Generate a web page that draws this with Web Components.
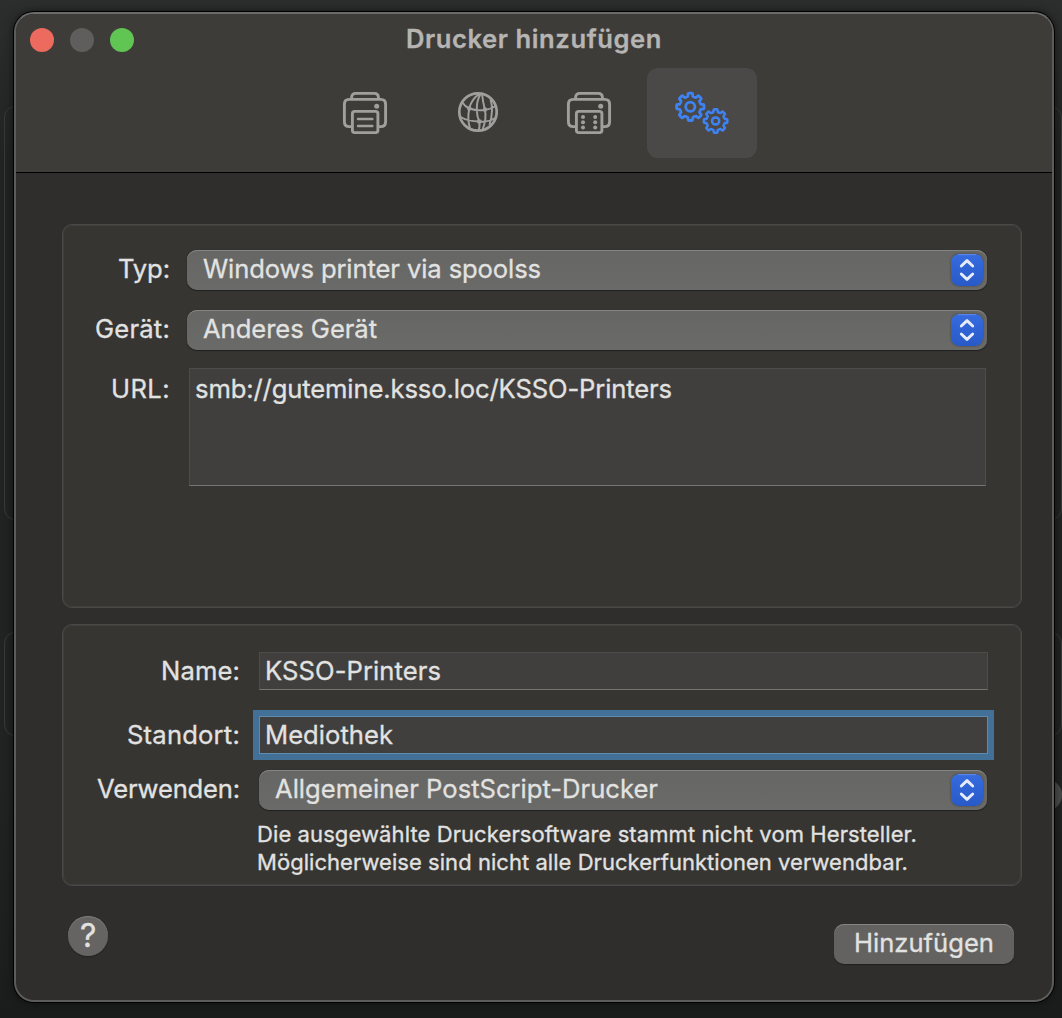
<!DOCTYPE html>
<html lang="de">
<head>
<meta charset="utf-8">
<title>Drucker hinzufügen</title>
<style>
html,body{margin:0;height:100%;overflow:hidden}
body{font:25.6px/30px Inter,"Liberation Sans",sans-serif;color:#e2e2e1;background:#1c1f1e;-webkit-text-stroke:.3px currentColor}
</style>
</head>
<body>
<printer-dialog></printer-dialog>
<script>
const define = (name, html, init) => customElements.define(name, class extends HTMLElement {
  connectedCallback() {
    if (this.shadowRoot) return;
    this.attachShadow({mode: 'open'}).innerHTML = html;
    if (init) init(this, this.shadowRoot);
  }
});

// Text run whose tracking is adjusted to reach the width in its "w" attribute.
customElements.define('fit-text', class extends HTMLElement {
  connectedCallback() {
    if (this.shadowRoot) return;
    const root = this.attachShadow({mode: 'open'});
    root.innerHTML = `<style>:host{display:inline-block;white-space:pre;font-feature-settings:"calt" 0,"liga" 0;font-kerning:normal}span{display:inline-block}</style><span></span>`;
    const span = root.querySelector('span');
    const text = this.getAttribute('text');
    span.textContent = text;
    const w = +this.getAttribute('w');
    const gap = (w - span.getBoundingClientRect().width) / text.length;
    span.style.letterSpacing = gap.toFixed(3) + 'px';
  }
});

define('traffic-lights', `<style>
:host{display:flex;gap:16px}
i{width:24px;height:24px;border-radius:50%;background:#ed6a5e}
i:nth-of-type(2){background:#5f5e5c}
i:nth-of-type(3){background:#61c554}
</style><i></i><i></i><i></i>`);

function gear(cx, cy, outer, root) {
  let d = '';
  for (let k = 0; k < 8; k++) {
    const p = (r, deg) => {
      const a = (k * 45 + deg - 90) * Math.PI / 180;
      return (cx + r * Math.cos(a)).toFixed(2) + ' ' + (cy + r * Math.sin(a)).toFixed(2);
    };
    d += (k ? 'L' : 'M') + p(root + .4, -13) + 'L' + p(outer - 1, -10.5) + 'Q' + p(outer, -10) + ' ' + p(outer, -6)
      + 'L' + p(outer, 6) + 'Q' + p(outer, 10) + ' ' + p(outer - 1, 10.5) + 'L' + p(root + .4, 13) + 'Q' + p(root - .4, 22.5) + ' ' + p(root + .4, 32);
  }
  return d + 'Z';
}
const printer = inner => `<svg width="48" height="46" viewBox="0 0 48 46" fill="none" stroke="#a09f9d" stroke-width="2.9">
<path d="M10.6 9V7.5Q10.6 3.4 14.8 3.4H33.2Q37.4 3.4 37.4 7.5V9"/>
<path d="M10.5 36.6H8.3Q3.4 36.6 3.4 31.7V14.3Q3.4 9.4 8.3 9.4H39.7Q44.6 9.4 44.6 14.3V31.7Q44.6 36.6 39.7 36.6H37.5"/>
<rect x="11.4" y="21.4" width="25.5" height="21.2" rx="2.3"/>
<circle cx="35.7" cy="16.2" r="2.5" fill="#a09f9d" stroke="none"/>${inner}</svg>`;
const icons = {
  'default': printer('<path d="M17 29H31.4M17 36H31.4" stroke-width="2.4" stroke-linecap="round"/>'),
  windows: printer('<g fill="#a09f9d" stroke="none"><circle cx="18" cy="27" r="2"/><circle cx="30.2" cy="27" r="2"/><circle cx="18" cy="32.3" r="2"/><circle cx="30.2" cy="32.3" r="2"/><circle cx="18" cy="37.6" r="2"/><circle cx="30.2" cy="37.6" r="2"/></g>'),
  ip: `<svg width="42" height="44" viewBox="-2 -1 42 44" fill="none" stroke="#a09f9d" stroke-width="2">
<circle cx="20" cy="20" r="18.7" stroke-width="2.7"/>
<path d="M21 2Q13 8 11.3 16.5Q9 27 12.2 37M22.5 2Q18.5 9 18.8 17.5Q18.8 24 21.3 29.5Q22 34 20.8 38.5M24 2Q25 10 26.8 17.5Q29 26 24.5 38M32.5 7.5Q36 18 31.5 33M4 10Q7 14.5 11.3 16.5Q19 19 27 18Q33 17 37.8 14M1.6 24.5Q10 29.5 21.3 29.5Q30 30.5 37.2 26"/>
<g fill="#a09f9d" stroke="none"><circle cx="11.3" cy="16.5" r="2.3"/><circle cx="27" cy="17.5" r="2.2"/><circle cx="21.3" cy="29.6" r="2.4"/></g></svg>`,
  advanced: `<svg width="58" height="46" viewBox="673 90 58 46" fill="none" stroke="#3f83f3" stroke-width="2.8" stroke-linejoin="round">
<path d="${gear(690.3, 106.8, 13.8, 10.5)}"/><circle cx="690.3" cy="106.8" r="4.6"/>
<path d="${gear(715.6, 121, 11.8, 9)}" stroke-width="2.5"/><circle cx="715.6" cy="121" r="3.6" stroke-width="2.5"/></svg>`
};
define('toolbar-item', `<style>
:host{display:flex;width:110px;height:90px;border-radius:11px;align-items:center;justify-content:center}
:host([selected]){background:#4a4947}
svg{display:block}
</style>`, (host, root) => root.innerHTML += icons[host.getAttribute('icon')]);

define('group-box', `<style>
:host{display:flex;flex-direction:column;box-sizing:border-box;border:1px solid #4a4948;border-radius:10px;background:#363532;box-shadow:inset 0 0 0 1px #3f3e3c}
</style><slot></slot>`);

define('form-row', `<style>
:host{display:flex}
.label{width:var(--label-width);text-align:right;flex:none;display:flex;justify-content:flex-end;height:38px;align-items:center}
slot{display:block}
</style><div class="label"><slot name="label"></slot></div><slot></slot>`);

define('pop-up', `<style>
:host{display:flex;box-sizing:border-box;height:40px;border-radius:10px;padding:0 4px 2px 16px;align-items:center;justify-content:space-between;background:linear-gradient(#666664,#6a6a68);box-shadow:inset 0 1px #858583,0 1px 1px #20201f,0 0 1px #222}
svg{display:block;border-radius:8px;margin-top:2px;box-shadow:0 0 2px #3c3c3c}
</style><slot></slot>
<svg width="32" height="32" viewBox="0 0 32 32"><defs><linearGradient id="g" x2="0" y2="1"><stop stop-color="#366ce0"/><stop offset="1" stop-color="#2859c7"/></linearGradient></defs>
<rect width="32" height="32" rx="8" fill="url(#g)"/><path d="M7 .6H25" stroke="#5e8ae8"/><path d="M10.3 12L16 6.6L21.7 12M10.3 20L16 25.4L21.7 20" fill="none" stroke="#e6ecfb" stroke-width="2.9" stroke-linecap="round" stroke-linejoin="round"/></svg>`);

define('text-field', `<style>
:host{display:block;box-sizing:border-box;border:1px solid #4c4c4a;border-bottom-color:#747472;background:#403f3d;padding:3px 5px}
:host([focused]){border-color:#5e8bb0;outline:6px solid #437096;outline-offset:-.5px;border-radius:0}
</style><slot></slot>`);

define('push-button', `<style>
:host{display:flex;box-sizing:border-box;width:180px;height:40px;padding-bottom:2px;border-radius:10px;align-items:center;justify-content:center;background:#636260;box-shadow:inset 0 1px #858482,0 1px 1px #20201f}
</style><slot></slot>`);

define('help-button', `<style>
:host{display:flex;box-sizing:border-box;width:40px;height:40px;padding-left:1px;border-radius:50%;align-items:center;justify-content:center;background:#656462;box-shadow:inset 0 1px #7d7c7a,0 1px 1px #222;font-size:32px}
</style><fit-text text="?" w="17"></fit-text>`);

// Outlines of the settings window behind the dialog.
define('back-window', `<style>
:host{position:absolute;inset:0;overflow:hidden;background:linear-gradient(#2b2e2d,#202322 160px,#202322 760px,#1c1f1e 960px,#1a1c1b)}
i{position:absolute;box-sizing:border-box;left:4px;width:1058px;border:1px solid #373938;border-radius:11px}
b{position:absolute;left:1030px;top:779px;width:32px;height:32px;border-radius:50%;background:#484a49}
</style><i style="top:106px;height:414px"></i><i style="top:632px;height:104px"></i><b></b>`);

define('printer-dialog', `<style>
:host{display:block;box-sizing:border-box;position:relative;width:1062px;height:1018px;padding:12px 8px 16px 14px}
main{position:relative;box-sizing:border-box;width:1040px;height:990px;border:2px solid #5d5c5b;border-top-color:#6c6b69;border-radius:20px;background:#2f2e2c;box-shadow:0 0 0 1px #000,0 0 10px #0009;display:flex;flex-direction:column;overflow:hidden}
header{height:158px;flex:none;background:#3d3c39;border-bottom:1px solid #000;display:flex;flex-direction:column}
.title{display:grid;grid-template-columns:1fr auto 1fr;align-items:start;padding:10px 14px 0;height:44px;box-sizing:border-box;color:#b6b5b3;font-weight:600;line-height:30px}
.title traffic-lights{margin-top:4px}
.tools{display:flex;gap:2.4px;padding:10px 0 0 293.5px}
.content{padding:51px 30px 0 46px;display:flex;flex-direction:column;gap:16px}
.one{height:384px;--label-width:107px;padding:25px 34px 0 0;gap:20px}
.two{height:262px;--label-width:177px;padding:27px 33px 0 0}
form-row pop-up{width:800px;margin-left:17px}
.url{width:797px;height:118px;margin:-2px 0 0 19px;padding:5px 5px}
.field{width:729px;height:38px;margin-left:19px}
.two pop-up{width:728px;margin-left:19px}
.standort{margin-top:26px}
.use{margin-top:16px}
.note{font-size:22px;line-height:28px;margin:10px 0 0 194px;display:flex;flex-direction:column;align-items:flex-start}
footer{display:flex;justify-content:space-between;padding:30px 38px 0 52px}
footer push-button{margin-top:8px}
</style>
<back-window></back-window>
<main>
<header><div class="title"><traffic-lights></traffic-lights><fit-text text="Drucker hinzufügen" w="256"></fit-text><span></span></div>
<div class="tools"><toolbar-item icon="default"></toolbar-item><toolbar-item icon="ip"></toolbar-item><toolbar-item icon="windows"></toolbar-item><toolbar-item icon="advanced" selected></toolbar-item></div></header>
<div class="content">
<group-box class="one">
<form-row><fit-text slot="label" text="Typ:" w="52"></fit-text><pop-up><fit-text text="Windows printer via spoolss" w="338"></fit-text></pop-up></form-row>
<form-row><fit-text slot="label" text="Gerät:" w="75"></fit-text><pop-up><fit-text text="Anderes Gerät" w="174"></fit-text></pop-up></form-row>
<form-row><fit-text slot="label" text="URL:" w="59"></fit-text><text-field class="url"><fit-text text="smb://gutemine.ksso.loc/KSSO-Printers" w="477"></fit-text></text-field></form-row>
</group-box>
<group-box class="two">
<form-row><fit-text slot="label" text="Name:" w="79"></fit-text><text-field class="field"><fit-text text="KSSO-Printers" w="176"></fit-text></text-field></form-row>
<form-row class="standort"><fit-text slot="label" text="Standort:" w="113"></fit-text><text-field class="field" focused><fit-text text="Mediothek" w="128"></fit-text></text-field></form-row>
<form-row class="use"><fit-text slot="label" text="Verwenden:" w="143"></fit-text><pop-up><fit-text text="Allgemeiner PostScript-Drucker" w="383"></fit-text></pop-up></form-row>
<div class="note"><fit-text text="Die ausgewählte Druckersoftware stammt nicht vom Hersteller." w="660"></fit-text><fit-text text="Möglicherweise sind nicht alle Druckerfunktionen verwendbar." w="651"></fit-text></div>
</group-box>
</div>
<footer><help-button></help-button><push-button><fit-text text="Hinzufügen" w="140"></fit-text></push-button></footer>
</main>`);
</script>
</body>
</html>
